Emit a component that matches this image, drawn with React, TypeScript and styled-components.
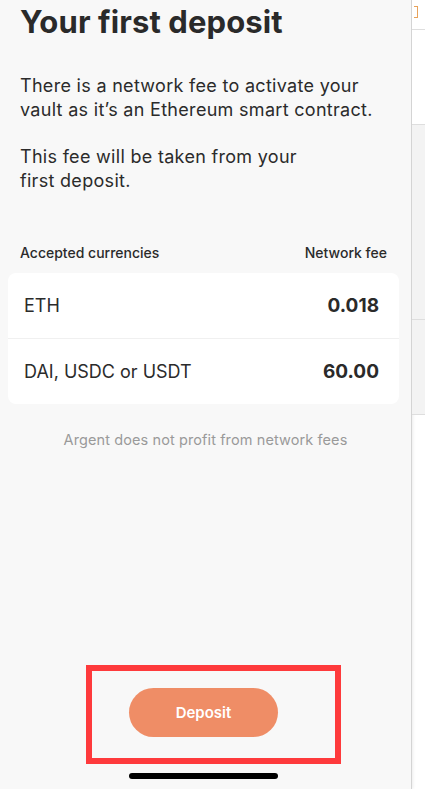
import styled, { createGlobalStyle } from "styled-components";

const GlobalStyle = createGlobalStyle`
  html, body {
    margin: 0;
    padding: 0;
    background: #ffffff;
  }
  body {
    font-family: Inter, "Liberation Sans", sans-serif;
    color: #2b2b2b;
  }
`;

const Screen = styled.div`
  width: 425px;
  height: 789px;
  display: flex;
  overflow: hidden;
`;

const Sheet = styled.div`
  width: 411px;
  height: 789px;
  background: #f8f8f8;
  border-right: 1px solid #d4d4d4;
  box-shadow: 1px 0 3px rgba(0, 0, 0, 0.08);
  display: flex;
  flex-direction: column;
  position: relative;
`;

const Side = styled.div`
  flex: 1;
  display: flex;
  flex-direction: column;
  background: #ffffff;
`;

const SideBlock = styled.div<{ $h: number; $bg?: string; $line?: boolean }>`
  height: ${(p) => p.$h}px;
  background: ${(p) => p.$bg || "#ffffff"};
  border-bottom: ${(p) => (p.$line ? "1px solid #dedede" : "none")};
  position: relative;
  box-sizing: border-box;
`;

const Bracket = styled.span`
  position: absolute;
  left: 2px;
  top: 6px;
  width: 3px;
  height: 10px;
  border: 1px solid #e8a25a;
  border-left: none;
`;

const SideGlyph = styled.span`
  position: absolute;
  left: 1px;
  top: 98px;
  font-size: 10px;
  color: #2a62c9;
  text-decoration: underline;
`;

const Content = styled.div`
  padding: 0 20px;
  display: flex;
  flex-direction: column;
`;

const Title = styled.h1`
  margin: 2px 0 0;
  font-size: 31px;
  font-weight: 700;
  letter-spacing: 0.1px;
  line-height: 40px;
  color: #2a2a2a;
`;

const Para = styled.p`
  margin: 0;
  font-size: 18px;
  letter-spacing: 0.3px;
  line-height: 23.5px;
  color: #2b2b2b;
  & + & {
    margin-top: 24px;
  }
`;

const Paras = styled.div`
  margin-top: 32px;
`;

const HeadRow = styled.div`
  display: flex;
  justify-content: space-between;
  padding: 0 24px 0 20px;
  margin-top: 52px;
  font-size: 14px;
  font-weight: 500;
  line-height: 18px;
  color: #2b2b2b;
`;

const Card = styled.div`
  margin: 11px 12px 0 8px;
  background: #ffffff;
  border-radius: 8px;
  display: flex;
  flex-direction: column;
`;

const Row = styled.div`
  height: 65px;
  display: flex;
  align-items: center;
  justify-content: space-between;
  padding: 0 20px 0 16px;
  & + & {
    border-top: 1px solid #f0f0f0;
  }
`;

const Currency = styled.span`
  font-size: 18px;
  color: #2b2b2b;
`;

const Fee = styled.span`
  font-size: 19px;
  font-weight: 700;
  color: #2a2a2a;
`;

const Note = styled.p`
  margin: 27px 0 0;
  text-align: center;
  font-size: 14.5px;
  letter-spacing: 0.1px;
  color: #9a9a9a;
`;

const Footer = styled.div`
  margin-top: auto;
  display: flex;
  flex-direction: column;
  align-items: center;
  padding: 0 4px 10px 0;
`;

const ButtonSpot = styled.div`
  position: relative;
  display: flex;
`;

const Highlight = styled.div`
  position: absolute;
  left: -43px;
  top: -23px;
  width: 255px;
  height: 99px;
  box-sizing: border-box;
  border: 6px solid #fe3a3c;
  pointer-events: none;
`;

const DepositButton = styled.button`
  width: 149px;
  height: 49px;
  border: none;
  border-radius: 25px;
  background: #ef8d66;
  color: #ffffff;
  font-family: inherit;
  font-size: 15px;
  font-weight: 600;
  cursor: pointer;
`;

const HomeBar = styled.div`
  width: 149px;
  height: 6px;
  border-radius: 3px;
  background: #000000;
  margin-top: 36px;
`;

export default function App() {
  return (
    <>
      <GlobalStyle />
      <Screen>
        <Sheet>
          <Content>
            <Title>Your first deposit</Title>
            <Paras>
              <Para>
                There is a network fee to activate your
                <br />
                vault as it’s an Ethereum smart contract.
              </Para>
              <Para>
                This fee will be taken from your
                <br />
                first deposit.
              </Para>
            </Paras>
          </Content>
          <HeadRow>
            <span>Accepted currencies</span>
            <span>Network fee</span>
          </HeadRow>
          <Card>
            <Row>
              <Currency>ETH</Currency>
              <Fee>0.018</Fee>
            </Row>
            <Row>
              <Currency>DAI, USDC or USDT</Currency>
              <Fee>60.00</Fee>
            </Row>
          </Card>
          <Note>Argent does not profit from network fees</Note>
          <Footer>
            <ButtonSpot>
              <DepositButton>Deposit</DepositButton>
              <Highlight />
            </ButtonSpot>
            <HomeBar />
          </Footer>
        </Sheet>
        <Side>
          <SideBlock $h={30} $line>
            <Bracket />
          </SideBlock>
          <SideBlock $h={95} $line>
            <SideGlyph>ヨ</SideGlyph>
          </SideBlock>
          <SideBlock $h={195} $bg="#f3f3f3" $line />
          <SideBlock $h={95} $bg="#f3f3f3" $line />
        </Side>
      </Screen>
    </>
  );
}
